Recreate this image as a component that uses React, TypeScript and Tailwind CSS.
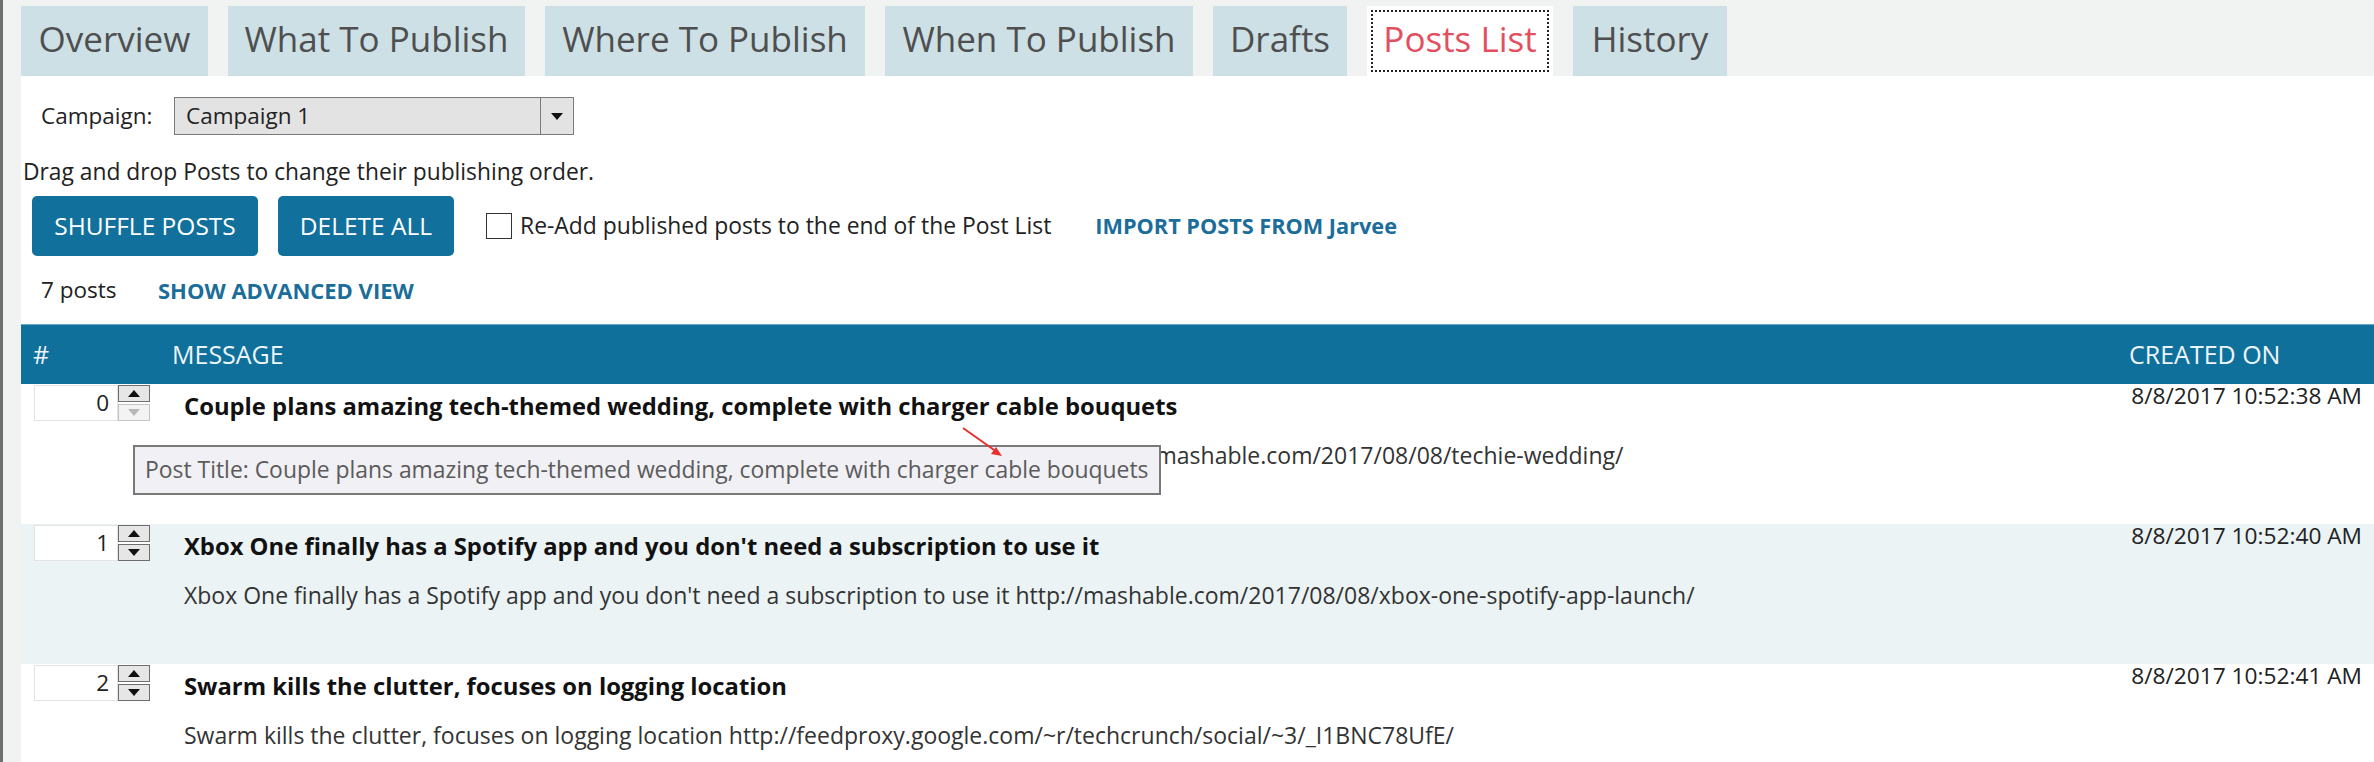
import type { ReactNode } from 'react';

const tabs = [
  { label: 'Overview', width: 'w-[187px]' },
  { label: 'What To Publish', width: 'w-[297px]' },
  { label: 'Where To Publish', width: 'w-[320px]' },
  { label: 'When To Publish', width: 'w-[308px]' },
  { label: 'Drafts', width: 'w-[134px]' },
  { label: 'Posts List', width: 'w-[186px]', active: true },
  { label: 'History', width: 'w-[154px]' },
];

const posts = [
  {
    n: 0,
    title: 'Couple plans amazing tech-themed wedding, complete with charger cable bouquets',
    body: 'Couple plans amazing tech-themed wedding, complete with charger cable bouquets http://mashable.com/2017/08/08/techie-wedding/',
    date: '8/8/2017 10:52:38 AM',
  },
  {
    n: 1,
    title: "Xbox One finally has a Spotify app and you don't need a subscription to use it",
    body: "Xbox One finally has a Spotify app and you don't need a subscription to use it http://mashable.com/2017/08/08/xbox-one-spotify-app-launch/",
    date: '8/8/2017 10:52:40 AM',
  },
  {
    n: 2,
    title: 'Swarm kills the clutter, focuses on logging location',
    body: 'Swarm kills the clutter, focuses on logging location http://feedproxy.google.com/~r/techcrunch/social/~3/_I1BNC78UfE/',
    date: '8/8/2017 10:52:41 AM',
  },
];

function Triangle({ up, color }: { up?: boolean; color: string }) {
  return (
    <svg width="12" height="7" viewBox="0 0 12 7">
      <path d={up ? 'M0 7 L6 0 L12 7 Z' : 'M0 0 L6 7 L12 0 Z'} fill={color} />
    </svg>
  );
}

function Spinner({ downDisabled }: { downDisabled?: boolean }) {
  return (
    <div className="flex h-[36px] w-[32px] flex-col gap-[2px] bg-white">
      <div className="flex flex-1 items-center justify-center border border-[#6d6d6d] bg-[#e6e6e6]">
        <Triangle up color="#111" />
      </div>
      <div
        className={`flex flex-1 items-center justify-center border ${
          downDisabled ? 'border-[#c4c4c4] bg-[#f3f3f3]' : 'border-[#6d6d6d] bg-[#e6e6e6]'
        }`}
      >
        <Triangle color={downDisabled ? '#b8b8b8' : '#111'} />
      </div>
    </div>
  );
}

function Button({ children, width }: { children: ReactNode; width: string }) {
  return (
    <button
      className={`${width} flex h-[60px] items-center justify-center rounded-[5px] bg-[#12709c] text-[24.5px] text-white`}
    >
      {children}
    </button>
  );
}

export default function App() {
  return (
    <div className="h-[762px] overflow-hidden border-l-[3px] border-[#6f6f6f] bg-[#f1f3f3] pl-[18px] font-['Open_Sans',sans-serif] text-[#222]">
      <nav className="flex h-[76px] items-end gap-[20px]">
        {tabs.map((t) =>
          t.active ? (
            <div key={t.label} className={`${t.width} h-[70px] bg-white p-[4px]`}>
              <div className="flex h-full items-center justify-center border-2 border-dotted border-[#222] pb-[3px] text-[35px] text-[#e2505f]">
                {t.label}
              </div>
            </div>
          ) : (
            <div
              key={t.label}
              className={`${t.width} flex h-[70px] items-center justify-center bg-[#cde0e6] pb-[4px] text-[35px] text-[#4f4f4f]`}
            >
              {t.label}
            </div>
          ),
        )}
      </nav>

      <main className="h-full bg-white">
        <div className="flex items-center pl-[20px] pt-[21px]">
          <span className="w-[133px] text-[22.5px] leading-[38px]">Campaign:</span>
          <div className="flex h-[38px] w-[400px] border border-[#7a7a7a] bg-[#e3e3e3]">
            <span className="flex-1 pl-[11px] text-[22.5px] leading-[36px]">Campaign 1</span>
            <span className="flex w-[33px] items-center justify-center border-l border-[#7a7a7a]">
              <Triangle color="#111" />
            </span>
          </div>
        </div>

        <p className="mt-[22px] pl-[2px] text-[22.8px] leading-[30px]">
          Drag and drop Posts to change their publishing order.
        </p>

        <div className="mt-[9px] flex items-center gap-[20px] pl-[11px]">
          <Button width="w-[226px]">SHUFFLE POSTS</Button>
          <Button width="w-[176px]">DELETE ALL</Button>
          <label className="ml-[12px] flex items-center gap-[8px] text-[22.9px]">
            <span className="h-[26px] w-[26px] border-[1.5px] border-[#333] bg-white" />
            Re-Add published posts to the end of the Post List
          </label>
          <a className="ml-[24px] text-[21.7px] font-bold text-[#1b6d9a]">IMPORT POSTS FROM Jarvee</a>
        </div>

        <div className="mt-[19px] flex h-[30px] items-center pl-[20px]">
          <span className="w-[117px] text-[22.5px]">7 posts</span>
          <a className="text-[22px] font-bold text-[#1b6d9a]">SHOW ADVANCED VIEW</a>
        </div>

        <div className="mt-[19px] grid h-[60px] grid-cols-[151px_1fr_245px] items-center border-t border-[#6aa6c6] bg-[#10709c] text-[25px] text-[#eef5f8]">
          <span className="pl-[12px]">#</span>
          <span>MESSAGE</span>
          <span>CREATED ON</span>
        </div>

        {posts.map((p, i) => (
          <div
            key={p.n}
            className={`relative grid h-[140px] grid-cols-[151px_1fr_245px] ${i % 2 === 1 ? 'bg-[#ebf3f5]' : 'bg-white'}`}
          >
            <div className="flex pl-[13px] pt-[1px]">
              <div className="h-[36px] w-[84px] border border-[#e3e3e3] bg-white pr-[8px] text-right text-[22.5px] leading-[34px]">
                {p.n}
              </div>
              <Spinner downDisabled={p.n === 0} />
            </div>
            <div className="overflow-hidden whitespace-nowrap pl-[12px] pt-[7px]">
              <div className="text-[23.8px] font-bold leading-[30px] text-[#111]">{p.title}</div>
              <div className="mt-[19px] text-[23px] leading-[30px] text-[#333]">{p.body}</div>
            </div>
            <div className="pr-[12px] text-right text-[22.7px] leading-[24px]">{p.date}</div>

            {p.n === 0 && (
              <>
                <div className="absolute left-[112px] top-[61px] flex h-[50px] w-[1028px] items-center whitespace-nowrap border-2 border-[#797979] bg-[#f0f0f5] pl-[10px] text-[22.9px] text-[#5b5b5b]">
                  Post Title: Couple plans amazing tech-themed wedding, complete with charger cable bouquets
                </div>
                <svg className="absolute left-[938px] top-[40px]" width="48" height="36" viewBox="0 0 48 36">
                  <line x1="4" y1="4" x2="38" y2="28" stroke="#e8312f" strokeWidth="2" />
                  <path d="M43 32 L32 30 L37 23 Z" fill="#e8312f" />
                </svg>
              </>
            )}
          </div>
        ))}
      </main>
    </div>
  );
}
